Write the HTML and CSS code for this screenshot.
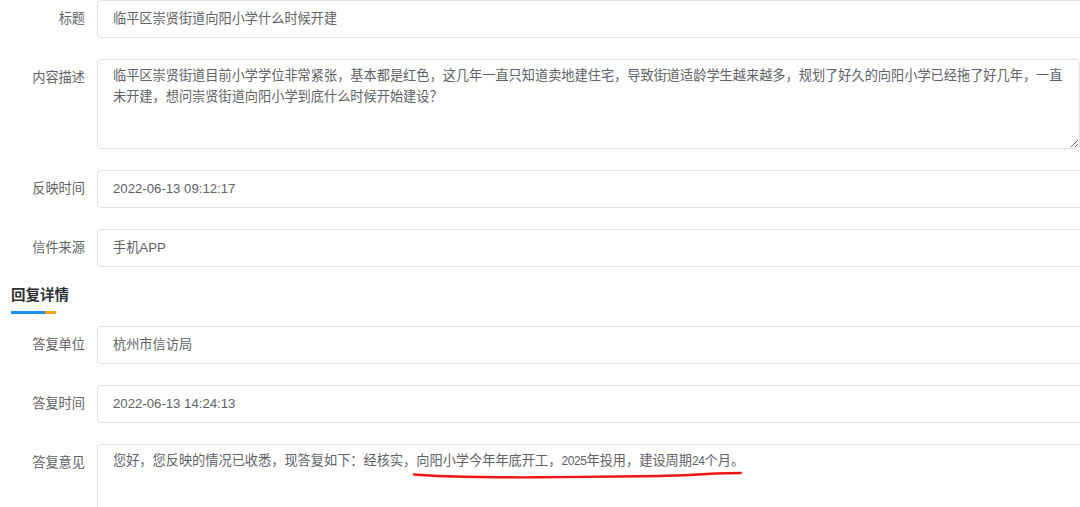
FILE: index.html
```html
<!DOCTYPE html>
<html lang="zh-CN">
<head>
<meta charset="UTF-8">
<meta name="viewport" content="width=device-width, initial-scale=1.0">
<title>信件详情</title>
<link rel="stylesheet" href="styles.css">
</head>
<body>

<div class="detail-form">

  <div class="form-item">
    <label class="form-label">标题</label>
    <div class="form-input">临平区崇贤街道向阳小学什么时候开建</div>
  </div>

  <div class="form-item">
    <label class="form-label">内容描述</label>
    <textarea class="form-textarea" readonly>临平区崇贤街道目前小学学位非常紧张，基本都是红色，这几年一直只知道卖地建住宅，导致街道适龄学生越来越多，规划了好久的向阳小学已经拖了好几年，一直未开建，想问崇贤街道向阳小学到底什么时候开始建设？</textarea>
  </div>

  <div class="form-item">
    <label class="form-label">反映时间</label>
    <div class="form-input">2022-06-13 09:12:17</div>
  </div>

  <div class="form-item">
    <label class="form-label">信件来源</label>
    <div class="form-input">手机APP</div>
  </div>

  <div class="section-title">
    <h3>回复详情</h3>
    <div class="title-bar"><span class="bar-blue"></span><span class="bar-orange"></span></div>
  </div>

  <div class="form-item">
    <label class="form-label">答复单位</label>
    <div class="form-input">杭州市信访局</div>
  </div>

  <div class="form-item">
    <label class="form-label">答复时间</label>
    <div class="form-input">2022-06-13 14:24:13</div>
  </div>

  <div class="form-item">
    <label class="form-label">答复意见</label>
    <div class="form-box">您好，您反映的情况已收悉，现答复如下：经核实，<span class="marked">向阳小学今年年底开工，<span class="num">2025</span>年投用，建设周期<span class="num">24</span>个月。<svg class="mark-line" viewBox="0 0 330 8" preserveAspectRatio="none"><path d="M1 2.5 C 12 3.5, 25 4, 34 4.2 C 70 5.2, 100 5.5, 124 5.3 C 160 5, 200 4.8, 224 4.3 C 250 3.8, 262 3.6, 274 3 C 290 2, 305 1.2, 326 1" /></svg></span></div>
  </div>

</div>

</body>
</html>
```

FILE: styles.css
```css
body {
  margin: 0;
  padding: 0;
  background-color: #fff;
  color: #606266;
  font-family: "Liberation Sans", "Noto Sans CJK SC", sans-serif;
  font-size: 13.2px;
  overflow: hidden;
}
.detail-form {
  width: 1110px;
}
.form-item {
  display: flex;
  align-items: flex-start;
  margin-bottom: 21px;
}
.form-label {
  width: 85px;
  padding-right: 12px;
  flex: none;
  text-align: right;
  line-height: 38px;
  color: #606266;
}
.form-input {
  flex: 1;
  height: 38px;
  box-sizing: border-box;
  padding: 0 15px;
  line-height: 36px;
  border: 1px solid #dcdfe6;
  border-radius: 4px;
  color: #606266;
  white-space: nowrap;
}
.form-textarea {
  flex: none;
  width: 983px;
  height: 90px;
  box-sizing: border-box;
  margin: 0;
  padding: 5px 15px;
  border: 1px solid #dcdfe6;
  border-radius: 4px;
  font-family: inherit;
  font-size: 13.2px;
  line-height: 21px;
  color: #606266;
  outline: none;
}
.form-box {
  flex: 1;
  height: 90px;
  box-sizing: border-box;
  padding: 5px 15px;
  border: 1px solid #dcdfe6;
  border-radius: 4px;
  line-height: 21px;
  color: #606266;
}
.num {
  font-size: 12px;
  letter-spacing: -0.4px;
}
.marked {
  position: relative;
}
.mark-line {
  position: absolute;
  left: -3px;
  top: 19px;
  width: calc(100% + 4px);
  height: 8px;
  overflow: visible;
}
.mark-line path {
  fill: none;
  stroke: #f01414;
  stroke-width: 2.4;
  stroke-linecap: round;
  vector-effect: non-scaling-stroke;
}
.section-title {
  padding: 0 0 12px 11px;
}
.section-title h3 {
  margin: 0;
  font-size: 14.5px;
  line-height: 14px;
  font-weight: bold;
  color: #303133;
}
.title-bar {
  display: flex;
  margin-top: 9px;
  height: 3px;
}
.bar-blue {
  width: 34px;
  background-color: #1f8ef1;
}
.bar-orange {
  width: 11px;
  background-color: #f5a31a;
}
```
